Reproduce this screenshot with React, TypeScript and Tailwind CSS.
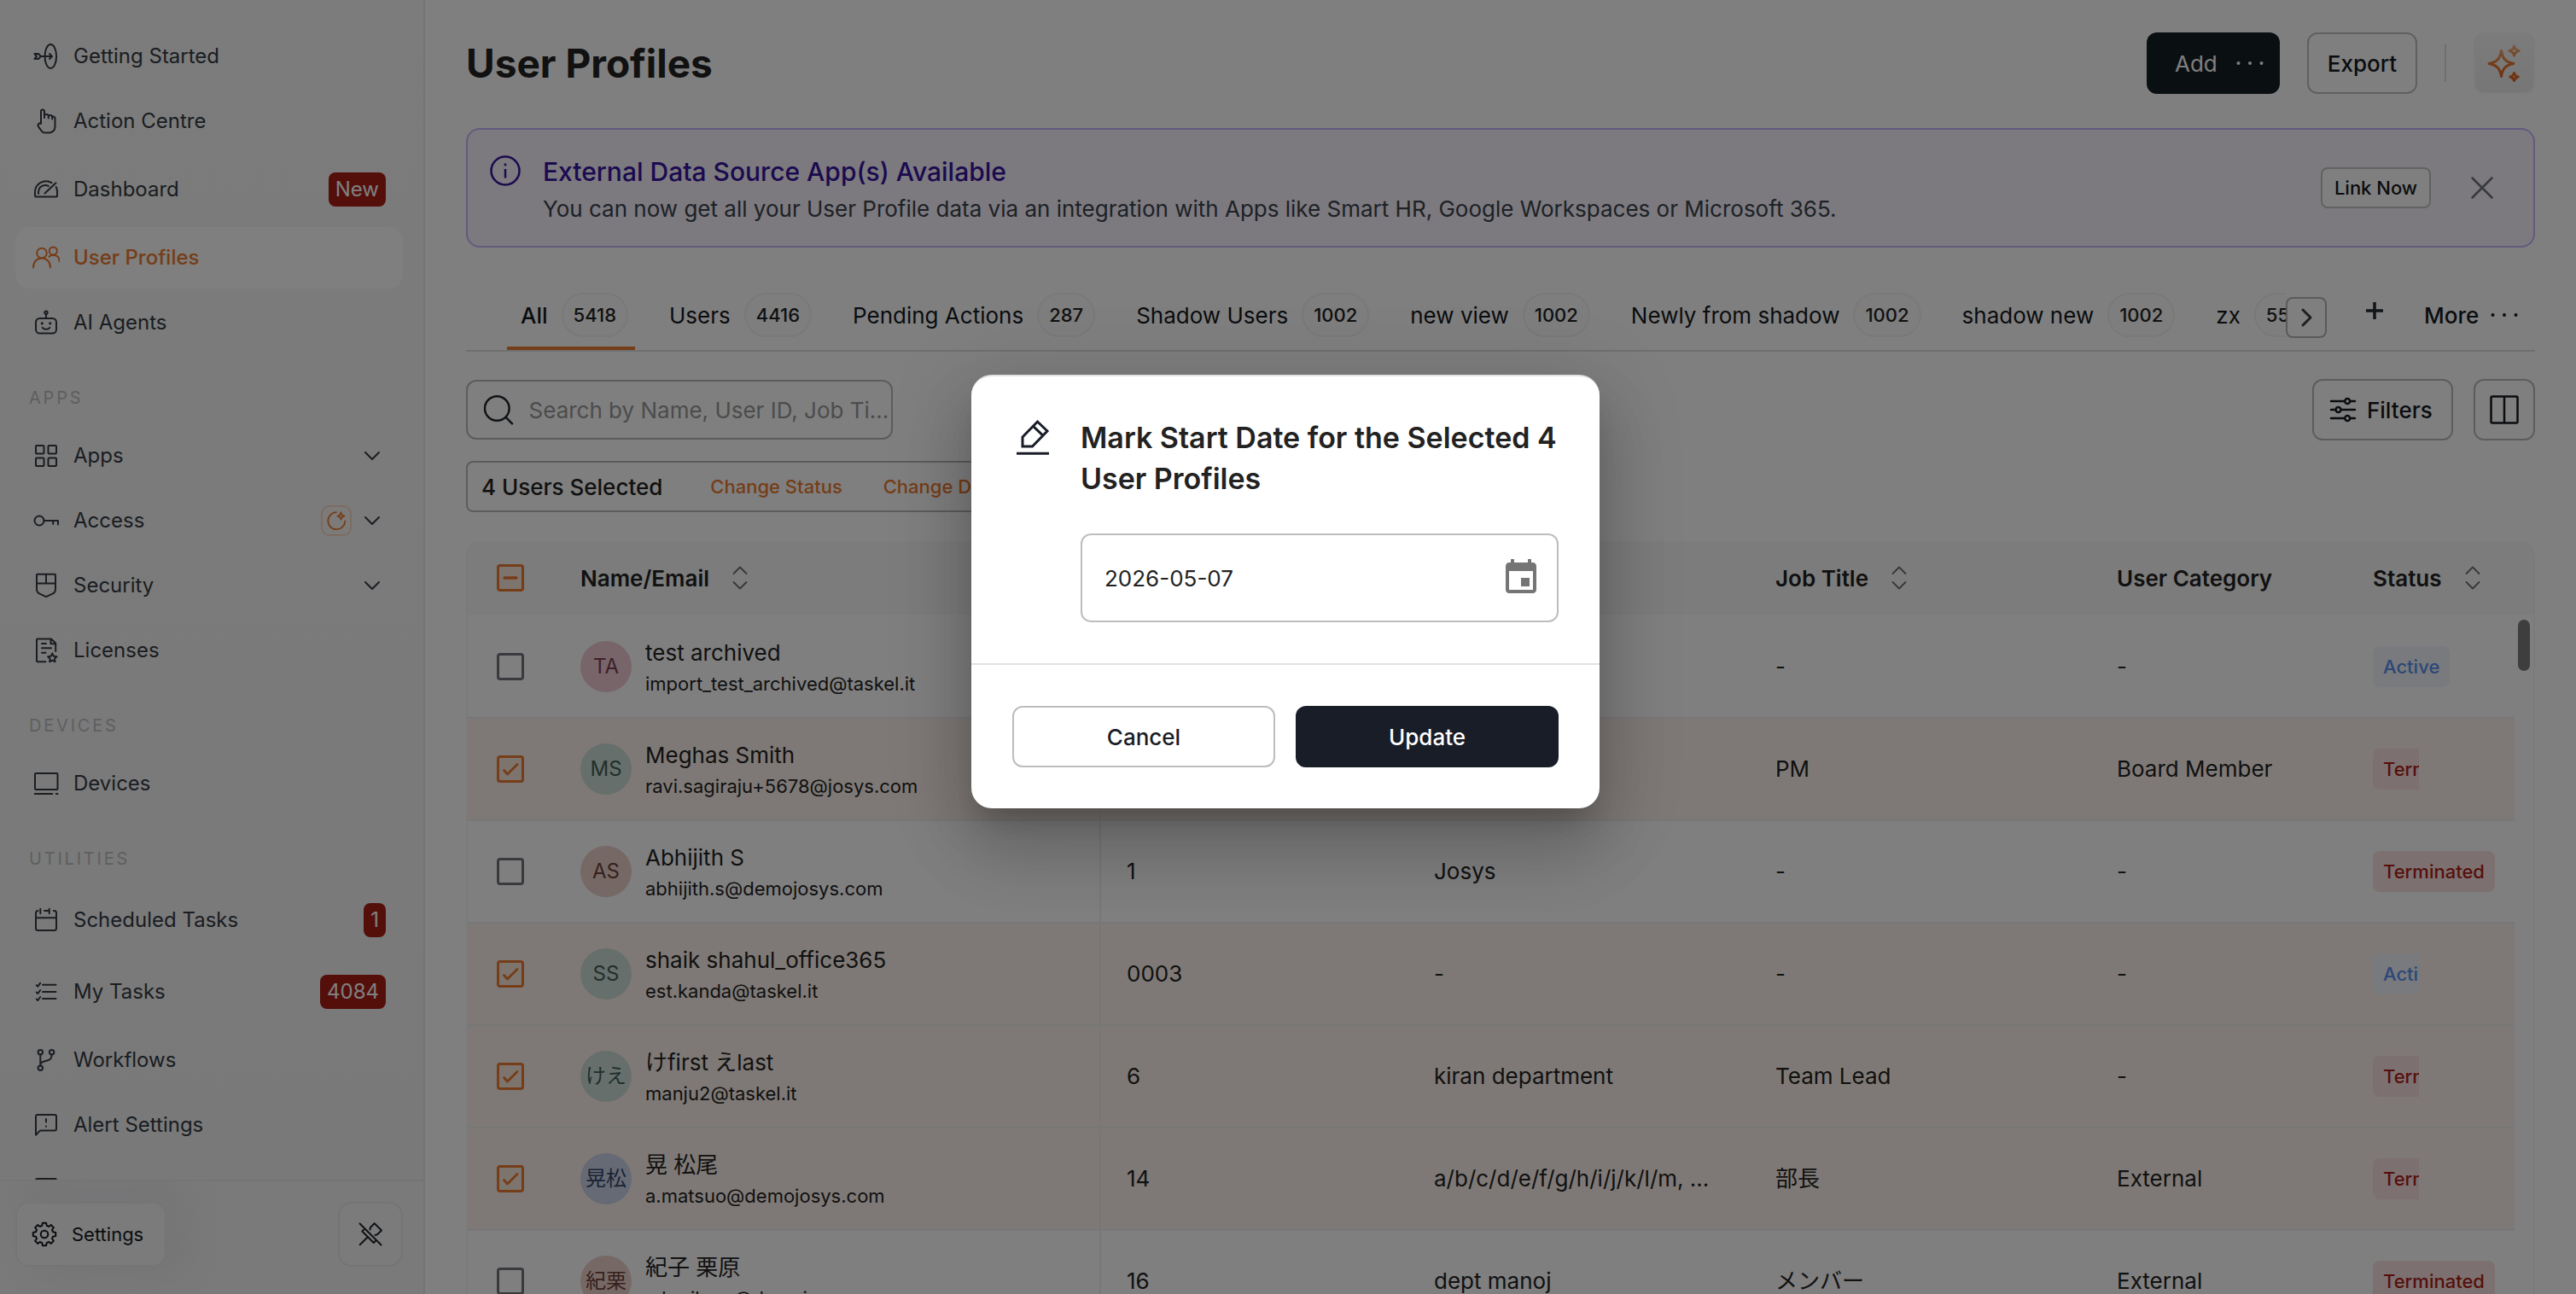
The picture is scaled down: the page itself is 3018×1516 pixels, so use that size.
import React from 'react';

type IconProps = { className?: string };

// Shared wrapper for the 32px line icons of the side navigation
function LineIcon({ children, className }: { children: React.ReactNode; className?: string }) {
  return (
    <svg
      viewBox="0 0 32 32"
      fill="none"
      stroke="currentColor"
      strokeWidth="2"
      strokeLinecap="round"
      strokeLinejoin="round"
      className={className ?? 'size-8 shrink-0'}
    >
      {children}
    </svg>
  );
}

const TargetIcon = () => (
  <LineIcon>
    <ellipse cx="21.300" cy="16" rx="6.800" ry="14" />
    <path d="M10 16h12.500M20 13l3 3-3 3" />
    <path d="M2.500 13H7l3 3-3 3H2.500L5 16z" />
  </LineIcon>
);

const HandIcon = () => (
  <LineIcon>
    <path d="M10 19V4.400a2 2 0 0 1 4 0V12M14 8h2.500a2.300 2.300 0 0 1 2.300 2.300V12.500M18.800 9h2a2.300 2.300 0 0 1 2.300 2.300V13.500M23.100 10.500h.9a2.500 2.500 0 0 1 2.500 2.500v9.500a7 7 0 0 1-7 7h-4.800a5 5 0 0 1-3.700-1.700l-4.200-5.600c-.6-1.400.1-3 1.500-3.700L10 17.500" />
  </LineIcon>
);

const GaugeIcon = () => (
  <LineIcon>
    <path d="M22.500 8.200A12.800 12.800 0 0 0 3 19v4a1.600 1.600 0 0 0 1.600 1.600h22.800A1.600 1.600 0 0 0 29 23v-4c0-2.200-.4-4.200-1.300-6M14.500 20.500 27.500 8.200M7 21v-2c0-4.500 3.400-8 8-8 1.400 0 2.700.3 3.800.9" />
  </LineIcon>
);

const UsersIcon = () => (
  <LineIcon>
    <circle cx="11" cy="10.500" r="5.800" />
    <path d="M1 27.500C1 21 5 16.400 11 16.400S21 21 21 27.500" />
    <circle cx="24.300" cy="8" r="4.600" />
    <path d="M19.500 14.800c1.300-1.300 2.900-2 4.800-2 4.400 0 7.200 2.800 7.200 7.200" />
  </LineIcon>
);

const BotIcon = () => (
  <LineIcon>
    <rect x="4" y="11" width="24" height="17.500" rx="4.500" />
    <circle cx="16" cy="4.300" r="1.700" />
    <path d="M16 6.500V11M11.700 21.800c1 1.300 2.500 2 4.300 2s3.300-.7 4.300-2" />
    <circle cx="11.300" cy="16.800" r="1" fill="currentColor" strokeWidth="1.200" />
    <circle cx="20.700" cy="16.800" r="1" fill="currentColor" strokeWidth="1.200" />
  </LineIcon>
);

const AppsIcon = () => (
  <LineIcon>
    <rect x="4" y="4" width="9.500" height="9.500" rx="1" />
    <rect x="18.500" y="4" width="9.500" height="9.500" rx="1" />
    <rect x="4" y="18.500" width="9.500" height="9.500" rx="1" />
    <rect x="18.500" y="18.500" width="9.500" height="9.500" rx="1" />
  </LineIcon>
);

const KeyIcon = () => (
  <LineIcon>
    <circle cx="8" cy="16" r="5.500" />
    <path d="M13.500 16H30v4.500M24.200 16v4" />
  </LineIcon>
);

const ShieldIcon = () => (
  <LineIcon>
    <path d="M5 3.500a.8.800 0 0 1 .8-.8h20.400a.8.800 0 0 1 .8.800V20c0 3-1.200 4.600-3.500 5.700L16 29.200l-7.500-3.500C6.200 24.600 5 23 5 20zM5 13.500h22M16 2.700v10.800" />
  </LineIcon>
);

const LicenseIcon = () => (
  <LineIcon>
    <path d="M15.500 29.200H6a1 1 0 0 1-1-1V3.500a1 1 0 0 1 1-1h16l5.200 5V17M21.500 3v5.200h5.200M11 8h5M11 13.200h11M11 18.700h4.500" />
    <path d="m23.300 19.500 1.600 3.200 3.600.5-2.600 2.500.6 3.600-3.200-1.700-3.200 1.700.6-3.600-2.600-2.500 3.600-.5z" />
  </LineIcon>
);

const MonitorIcon = () => (
  <LineIcon>
    <rect x="3" y="4" width="26.500" height="19" rx="1" />
    <path d="M2.800 28h20.500M27.800 28h1.700" />
  </LineIcon>
);

const CalendarIcon = () => (
  <LineIcon>
    <path d="M6.500 5A2.500 2.500 0 0 0 4 7.500v18A2.500 2.500 0 0 0 6.500 28h19a2.500 2.500 0 0 0 2.500-2.500v-18A2.500 2.500 0 0 0 25.500 5h-.7M14 5h5.500M9.300 2.800v5.500M19.700 2.800v5.500M4 13.300h24" />
  </LineIcon>
);

const TasksIcon = () => (
  <LineIcon>
    <path d="M12 7.700h15.500M12 16h15.500M12 24h15.500M4.800 8.200l1.500 1.500 2.900-4M4.800 16.500l1.500 1.500 2.900-4M4.800 24.500 6.300 26l2.900-4" />
  </LineIcon>
);

const BranchIcon = () => (
  <LineIcon>
    <circle cx="9.300" cy="6.700" r="2.700" />
    <circle cx="22.600" cy="6.700" r="2.700" />
    <circle cx="9.300" cy="25.300" r="2.700" />
    <path d="M9.300 9.400v13.200M22.600 9.400c0 4-1.400 6-4.600 6.900l-5 1.400c-2.200.6-3.700 1.700-3.700 3.800" />
  </LineIcon>
);

const AlertIcon = () => (
  <LineIcon>
    <path d="M4 27.800V6a2 2 0 0 1 2-2h20a2 2 0 0 1 2 2v14.500a2 2 0 0 1-2 2H10.200c-.9 0-1.600.3-2.200.9zM16 9v3.500M16 17.500v.3" />
  </LineIcon>
);

const LogIcon = () => (
  <LineIcon>
    <rect x="4" y="3" width="24" height="24" rx="1.500" />
  </LineIcon>
);

const ChevronDown = () => (
  <svg viewBox="0 0 24 24" fill="none" stroke="currentColor" strokeWidth="2" strokeLinecap="round" strokeLinejoin="round" className="size-6">
    <path d="m4 8 8 8 8-8" />
  </svg>
);

// Gear outline with eight teeth, built from alternating radii
const gearPath = (() => {
  const pts: string[] = [];
  for (let i = 0; i < 8; i++) {
    const base = (i * Math.PI) / 4;
    [
      [-0.26, 10.4],
      [-0.16, 13.4],
      [0.16, 13.4],
      [0.26, 10.4],
    ].forEach(([da, r]) => {
      pts.push(`${(16 + r * Math.sin(base + da)).toFixed(2)} ${(16 - r * Math.cos(base + da)).toFixed(2)}`);
    });
  }
  return `M${pts.join('L')}Z`;
})();

const GearIcon = () => (
  <LineIcon>
    <path d={gearPath} />
    <circle cx="16" cy="16" r="4.300" />
  </LineIcon>
);

const UnpinIcon = () => (
  <svg viewBox="0 0 30 30" fill="none" stroke="currentColor" strokeWidth="2" strokeLinecap="round" strokeLinejoin="round" className="size-[30px]">
    <path d="M2.500 2.500 27.500 27.500M2.700 27.300l8.800-8.800M8 9l-2.700 2.500L18.800 25l2.700-2.700M14.500 9.500 15 7l4.700-4.700L28 10.500l-5 4.800-2.500.7" />
  </svg>
);

const SparklesIcon = () => (
  <svg viewBox="0 0 44 48" fill="none" stroke="url(#spark)" strokeWidth="3" strokeLinejoin="round" className="h-12 w-11">
    <defs>
      <linearGradient id="spark" gradientUnits="userSpaceOnUse" x1="22" y1="2" x2="22" y2="47">
        <stop offset="0" stopColor="#eeb48c" />
        <stop offset="0.500" stopColor="#e87a30" />
        <stop offset="1" stopColor="#d8611c" />
      </linearGradient>
    </defs>
    <path d="M18.500 9.500c1.500 9.200 4.800 13 14.500 15-9.700 2-13 5.800-14.500 15-1.500-9.200-4.800-13-14.500-15 9.700-2 13-5.800 14.500-15z" />
    <path d="M33.600 4c.8 3.400 2 4.800 5.700 5.500-3.700.7-4.900 2.100-5.700 5.500-.8-3.400-2-4.800-5.700-5.500 3.700-.7 4.900-2.100 5.700-5.500z" />
    <path d="M33.500 35.500c.7 2.800 1.700 3.900 4.700 4.500-3 .6-4 1.700-4.700 4.500-.7-2.800-1.700-3.900-4.700-4.500 3-.6 4-1.700 4.700-4.500z" />
  </svg>
);

const RefreshSparkIcon = () => (
  <svg viewBox="0 0 24 24" fill="none" stroke="#ea7a30" strokeWidth="1.800" strokeLinecap="round" strokeLinejoin="round" className="size-6">
    <path d="M12 2.200a10 10 0 1 0 10.300 10.300" />
    <path d="M17.500 2.500c.4 2.700 1.400 3.700 4 4.100-2.600.4-3.600 1.400-4 4.100-.4-2.700-1.400-3.700-4-4.100 2.600-.4 3.600-1.400 4-4.100z" />
  </svg>
);

const SortIcon = () => (
  <svg viewBox="0 0 18 28" fill="none" stroke="#6f6f6f" strokeWidth="1.800" strokeLinecap="round" strokeLinejoin="round" className="h-7 w-[18px]">
    <path d="M1.500 9 9 1.500 16.500 9M1.500 19 9 26.500l7.500-7.500" />
  </svg>
);

const Dots = ({ className }: IconProps) => (
  <svg viewBox="0 0 32 6" fill="currentColor" className={`h-[6px] w-8 ${className ?? ''}`}>
    <circle cx="2.500" cy="3" r="2" />
    <circle cx="16" cy="3" r="2" />
    <circle cx="29.500" cy="3" r="2" />
  </svg>
);

type NavEntry = {
  label: string;
  icon: () => React.ReactElement;
  badge?: string;
  active?: boolean;
  expandable?: boolean;
  spark?: boolean;
};

const navSections: { title?: string; items: NavEntry[] }[] = [
  {
    items: [
      { label: 'Getting Started', icon: TargetIcon },
      { label: 'Action Centre', icon: HandIcon },
      { label: 'Dashboard', icon: GaugeIcon, badge: 'New' },
      { label: 'User Profiles', icon: UsersIcon, active: true },
      { label: 'AI Agents', icon: BotIcon },
    ],
  },
  {
    title: 'APPS',
    items: [
      { label: 'Apps', icon: AppsIcon, expandable: true },
      { label: 'Access', icon: KeyIcon, expandable: true, spark: true },
      { label: 'Security', icon: ShieldIcon, expandable: true },
      { label: 'Licenses', icon: LicenseIcon },
    ],
  },
  {
    title: 'DEVICES',
    items: [{ label: 'Devices', icon: MonitorIcon }],
  },
  {
    title: 'UTILITIES',
    items: [
      { label: 'Scheduled Tasks', icon: CalendarIcon, badge: '1' },
      { label: 'My Tasks', icon: TasksIcon, badge: '4084' },
      { label: 'Workflows', icon: BranchIcon },
      { label: 'Alert Settings', icon: AlertIcon },
      { label: '', icon: LogIcon },
    ],
  },
];

function NavItem({ item }: { item: NavEntry }) {
  const Icon = item.icon;
  return (
    <div className={item.badge ? 'h-[84px] py-1.5' : 'h-[76px] py-0.5'}>
      <div
        className={`flex h-[72px] items-center rounded-2xl pl-5 pr-5 ${
          item.active ? 'bg-[#fefefe] font-medium text-[#ea7a30]' : 'text-[#343b43]'
        }`}
      >
        <Icon />
        <span className="ml-4 flex-1 whitespace-nowrap text-[24px]">{item.label}</span>
        {item.spark && (
          <span className="mr-3 flex size-9 items-center justify-center rounded-[10px] border-2 border-[#f6d9c6] bg-[#faf6f3]">
            <RefreshSparkIcon />
          </span>
        )}
        {item.expandable && (
          <span className="mr-1">
            <ChevronDown />
          </span>
        )}
        {item.badge && (
          <span className="flex h-10 items-center rounded-lg bg-[#a91e17] px-2 text-[24px] text-white">
            {item.badge}
          </span>
        )}
      </div>
    </div>
  );
}

function Sidebar() {
  return (
    <aside className="flex h-full w-[498px] shrink-0 flex-col border-r-2 border-[#e9e9e9] bg-[#f6f6f6]">
      <nav className="h-[1382px] overflow-hidden bg-gradient-to-b from-[#f8f8f8] to-[#f3f3f3] pl-[18px] pr-6 pt-7">
        {navSections.map((section, i) => (
          <div key={i}>
            {section.title && (
              <div className="h-20 pl-4 pt-[35px] text-[20px] leading-[30px] tracking-[2.8px] text-[#bdbfc1]">
                {section.title}
              </div>
            )}
            {section.items.map((item) => (
              <NavItem key={item.label} item={item} />
            ))}
          </div>
        ))}
      </nav>
      <div className="relative flex flex-1 items-start justify-between overflow-hidden border-t-2 border-[#ebebeb] bg-[#f4f4f4] pl-[18px] pr-6 pt-6">
        <div className="absolute left-6 top-0 h-10 w-48 rounded-full bg-[#e7e7eb] blur-xl" />
        <div className="absolute left-10 top-14 h-11 w-44 rounded-full bg-[#e3e3e8] blur-xl" />
        <button className="relative flex h-[76px] w-[177px] items-center rounded-2xl border-2 border-[#ebebeb] bg-[#f7f7f7] pl-4 text-[22px] text-[#14191e]">
          <GearIcon />
          <span className="ml-4">Settings</span>
        </button>
        <button className="relative flex size-[76px] items-center justify-center rounded-2xl border-2 border-[#e8e8e8] bg-[#f6f6f6] text-[#20262c]">
          <UnpinIcon />
        </button>
      </div>
    </aside>
  );
}

function Banner() {
  return (
    <div className="mt-10 flex h-[140px] items-center rounded-2xl border-2 border-[#c8b4fc] bg-[#f8f2ff] pl-6 pr-10">
      <div className="flex flex-1 gap-6 pt-1.5">
        <svg viewBox="0 0 40 40" fill="none" stroke="#36149e" strokeWidth="2.500" className="-mt-px size-10 shrink-0">
          <circle cx="20" cy="20" r="16.500" />
          <path d="M20 18v10.500M20 11.500v2.800" strokeWidth="2.500" />
        </svg>
        <div>
          <div className="text-[30px] font-medium leading-10 text-[#36149e]">
            External Data Source App(s) Available
          </div>
          <div className="mt-[3px] text-[26px] leading-[42px] text-[#3a444b]">
            You can now get all your User Profile data via an integration with Apps like Smart HR,
            Google Workspaces or Microsoft 365.
          </div>
        </div>
      </div>
      <button className="h-12 w-[129px] rounded-lg border-2 border-[#c4c4c4] bg-white text-[22px] font-medium text-[#14191e]">
        Link Now
      </button>
      <svg viewBox="0 0 40 40" fill="none" stroke="#6f757b" strokeWidth="2.500" strokeLinecap="round" className="ml-10 size-10">
        <path d="m8.500 8.500 23 23M31.500 8.500l-23 23" />
      </svg>
    </div>
  );
}

const tabs = [
  { label: 'All', count: '5418' },
  { label: 'Users', count: '4416' },
  { label: 'Pending Actions', count: '287' },
  { label: 'Shadow Users', count: '1002' },
  { label: 'new view', count: '1002' },
  { label: 'Newly from shadow', count: '1002' },
  { label: 'shadow new', count: '1002' },
  { label: 'zx', count: '5541' },
];

function Tabs() {
  return (
    <div className="mt-9 flex h-[86px] items-stretch border-b-2 border-[#dedede] text-[#14191e]">
      <div className="flex w-[2132px] gap-6 overflow-hidden pl-12">
        {tabs.map((tab, i) => (
          <div
            key={tab.label}
            className={`flex h-full shrink-0 items-center gap-4 border-b-4 pl-4 pr-2 pt-1.5 ${
              i === 0 ? 'border-[#ea7a30]' : 'border-transparent'
            }`}
          >
            <span className={`whitespace-nowrap text-[26px] ${i === 0 ? 'font-medium' : ''}`}>{tab.label}</span>
            <span className="flex h-[52px] items-center rounded-full border-2 border-[#f2f2f2] bg-[#fcfcfc] px-3 text-[22px] font-medium text-[#222]">
              {tab.count}
            </span>
          </div>
        ))}
      </div>
      <button className="mt-[22px] flex h-12 w-12 shrink-0 items-center justify-center rounded-lg border-2 border-[#b4b4b4] bg-white text-[#3a3f44]">
        <svg viewBox="0 0 24 24" fill="none" stroke="currentColor" strokeWidth="3" strokeLinecap="round" strokeLinejoin="round" className="size-6">
          <path d="m8 3 9 9-9 9" />
        </svg>
      </button>
      <svg viewBox="0 0 20 20" stroke="#222a33" strokeWidth="3.500" className="ml-[46px] mt-7 size-5 shrink-0">
        <path d="M10 0v20M0 10h20" />
      </svg>
      <div className="ml-[48px] flex items-center gap-[14px] pt-0.5">
        <span className="text-[26px] font-medium">More</span>
        <Dots />
      </div>
    </div>
  );
}

function Toolbar() {
  return (
    <div className="mt-8 flex h-[72px] items-center justify-between">
      <div className="flex h-[70px] w-[500px] items-center rounded-xl border-2 border-[#b9b9b9] pl-[18px]">
        <svg viewBox="0 0 36 36" fill="none" stroke="#20262e" strokeWidth="2.500" strokeLinecap="round" className="size-9">
          <circle cx="16.500" cy="16.500" r="14.500" />
          <path d="m27 27 7.500 7.500" />
        </svg>
        <input
          readOnly
          placeholder="Search by Name, User ID, Job Ti..."
          className="ml-[18px] w-[430px] bg-transparent text-[26px] outline-none placeholder:text-[#989898]"
        />
      </div>
      <div className="flex gap-6">
        <button className="flex h-[72px] w-[165px] items-center rounded-xl border-2 border-[#b9b9b9] pl-[18px] text-[26px] font-medium text-[#14191e]">
          <svg viewBox="0 0 32 32" fill="none" stroke="currentColor" strokeWidth="2.500" strokeLinecap="round" className="size-8">
            <path d="M2 6h15M25.500 6H30M2 16h4.500M14.500 16H30M2 26h15M25.500 26H30" />
            <circle cx="21.200" cy="6" r="3" />
            <circle cx="10.500" cy="16" r="3" />
            <circle cx="21.200" cy="26" r="3" />
          </svg>
          <span className="ml-3">Filters</span>
        </button>
        <button className="flex size-[72px] items-center justify-center rounded-xl border-2 border-[#b9b9b9] text-[#14191e]">
          <svg viewBox="0 0 36 36" fill="none" stroke="currentColor" strokeWidth="2.500" strokeLinejoin="round" className="size-9">
            <rect x="2.500" y="2.500" width="31" height="31" rx="1.500" />
            <path d="M18 2.500v31" />
          </svg>
        </button>
      </div>
    </div>
  );
}

function Checkbox({ state }: { state: 'on' | 'off' | 'mixed' }) {
  if (state === 'off') {
    return <span className="size-8 rounded-[4px] border-[3px] border-[#74747c]" />;
  }
  return (
    <span className="flex size-8 items-center justify-center rounded-[4px] border-[3px] border-[#ea7a30] bg-[#fde9dd]">
      <svg viewBox="0 0 26 26" fill="none" stroke="#ea7a30" strokeWidth="2.800" strokeLinecap="round" strokeLinejoin="round" className="size-[26px]">
        {state === 'on' ? <path d="m5.500 14.500 4 4.500L21 7.500" /> : <path d="M6 13h14" strokeWidth="3.500" />}
      </svg>
    </span>
  );
}

type User = {
  name: string;
  email: string;
  initials: string;
  avatar: string;
  id: string;
  department: string;
  title: string;
  category: string;
  status: 'Active' | 'Terminated';
  selected: boolean;
};

const PINK = 'bg-[#efcad5] text-[#7c4056]';
const GREEN = 'bg-[#cfdfd8] text-[#40605a]';
const PEACH = 'bg-[#ecd2ca] text-[#6c423c]';
const BLUE = 'bg-[#cbd5e8] text-[#36456a]';

const users: User[] = [
  { name: 'test archived', email: 'import_test_archived@taskel.it', initials: 'TA', avatar: PINK, id: '', department: '', title: '-', category: '-', status: 'Active', selected: false },
  { name: 'Meghas Smith', email: 'ravi.sagiraju+5678@josys.com', initials: 'MS', avatar: GREEN, id: '', department: '', title: 'PM', category: 'Board Member', status: 'Terminated', selected: true },
  { name: 'Abhijith S', email: 'abhijith.s@demojosys.com', initials: 'AS', avatar: PEACH, id: '1', department: 'Josys', title: '-', category: '-', status: 'Terminated', selected: false },
  { name: 'shaik shahul_office365', email: 'est.kanda@taskel.it', initials: 'SS', avatar: GREEN, id: '0003', department: '-', title: '-', category: '-', status: 'Active', selected: true },
  { name: 'けfirst えlast', email: 'manju2@taskel.it', initials: 'けえ', avatar: GREEN, id: '6', department: 'kiran department', title: 'Team Lead', category: '-', status: 'Terminated', selected: true },
  { name: '晃 松尾', email: 'a.matsuo@demojosys.com', initials: '晃松', avatar: BLUE, id: '14', department: 'a/b/c/d/e/f/g/h/i/j/k/l/m, ...', title: '部長', category: 'External', status: 'Terminated', selected: true },
  { name: '紀子 栗原', email: 'n.kurihara@demojosys.com', initials: '紀栗', avatar: PEACH, id: '16', department: 'dept manoj', title: 'メンバー', category: 'External', status: 'Terminated', selected: false },
];

function StatusPill({ user }: { user: User }) {
  const tone = user.status === 'Active' ? 'bg-[#f0f4fc] text-[#5a90ee]' : 'bg-[#f9e1e0] text-[#ac1e16]';
  return (
    <div className={`h-12 overflow-hidden ${user.selected ? 'w-[54px]' : ''}`}>
      <span className={`inline-flex h-12 items-center rounded-lg px-3 text-[22px] font-medium ${tone}`}>
        {user.status}
      </span>
    </div>
  );
}

const ROW_GRID = 'grid grid-cols-[742px_360px_400px_400px_300px_196px]';

function UserRow({ user }: { user: User }) {
  return (
    <div
      className={`${ROW_GRID} h-[120px] w-[2398px] items-stretch border-b-2 border-[#efefef] text-[26px] text-[#222] ${
        user.selected ? 'bg-[#fdf3ec]' : ''
      }`}
    >
      <div className="flex items-center border-r-2 border-[#efefef] pl-[34px]">
        <Checkbox state={user.selected ? 'on' : 'off'} />
        <span className={`ml-[66px] flex size-[60px] shrink-0 items-center justify-center whitespace-nowrap rounded-full text-[24px] ${user.avatar}`}>
          {user.initials}
        </span>
        <div className="ml-4 whitespace-nowrap">
          <div className="h-10 text-[26px] leading-[38px]">{user.name}</div>
          <div className="h-[30px] text-[22px] leading-[30px]">{user.email}</div>
        </div>
      </div>
      <div className="flex items-center pb-px pl-[30px]">{user.id}</div>
      <div className="flex items-center pb-px pl-[30px]">{user.department}</div>
      <div className="flex items-center pb-px pl-[30px]">{user.title}</div>
      <div className="flex items-center pb-px pl-[30px]">{user.category}</div>
      <div className="flex items-center pl-[30px]">
        <StatusPill user={user} />
      </div>
    </div>
  );
}

function UserTable() {
  return (
    <div className="relative mt-[34px] flex-1 overflow-hidden rounded-t-2xl border-x-2 border-[#f6f6f6]">
      <div className={`${ROW_GRID} h-[88px] items-center border-b-2 border-white bg-[#f8f8f8] text-[26px] font-semibold text-[#222]`}>
        <div className="flex items-center pl-[34px]">
          <Checkbox state="mixed" />
          <span className="ml-[66px] mr-[27px]">Name/Email</span>
          <SortIcon />
        </div>
        <div />
        <div />
        <div className="flex items-center gap-[27px] pl-[30px]">
          Job Title
          <SortIcon />
        </div>
        <div className="pl-[30px]">User Category</div>
        <div className="flex items-center gap-[27px] pl-[30px]">
          Status
          <SortIcon />
        </div>
      </div>
      {users.map((user) => (
        <UserRow key={user.email} user={user} />
      ))}
      <div className="absolute right-1 top-[92px] h-[60px] w-3.5 rounded-full bg-[#7c7c7c]" />
    </div>
  );
}

function StartDateDialog() {
  return (
    <div className="h-[508px] w-[736px] rounded-3xl border-t-2 border-[#e2e2e2] bg-white shadow-[0px_22px_30px_-14px_rgba(0,0,0,0.2),0px_48px_76px_6px_rgba(0,0,0,0.14),0px_18px_92px_16px_rgba(0,0,0,0.12)]">
      <div className="h-[336px] px-12 pt-12">
        <div className="flex">
          <svg viewBox="0 0 40 44" fill="none" stroke="#181d27" strokeWidth="3" className="ml-1 mt-px h-11 w-10 shrink-0">
            <path d="M8 33V22L25.500 4 37 15 19.500 33zM20.500 9.300 32 20.300" />
            <path d="M1 41.200h38" />
          </svg>
          <h2 className="ml-9 text-[34px] font-semibold leading-[48px] text-[#222]">
            Mark Start Date for the Selected 4<br />
            User Profiles
          </h2>
        </div>
        <div className="ml-20 mt-10 flex h-[104px] items-center justify-between rounded-xl border-2 border-[#bdbdbd] pl-[26px] pr-[18px]">
          <span className="text-[26px] text-[#222]">2026-05-07</span>
          <svg viewBox="0 0 24 24" fill="#757575" className="size-12">
            <path d="M17 12h-5v5h5v-5zM16 1v2H8V1H6v2H5c-1.110 0-1.990.9-1.990 2L3 19c0 1.100.890 2 2 2h14c1.100 0 2-.9 2-2V5c0-1.100-.9-2-2-2h-1V1h-2zm3 18H5V8h14v11z" />
          </svg>
        </div>
      </div>
      <div className="flex justify-between border-t-2 border-[#e2e2e2] px-12 pt-12">
        <button className="h-[72px] w-[308px] rounded-xl border-2 border-[#bdbdbd] text-[26px] font-medium text-[#181d27]">
          Cancel
        </button>
        <button className="h-[72px] w-[308px] rounded-xl bg-[#181d27] text-[26px] font-medium text-white">
          Update
        </button>
      </div>
    </div>
  );
}

export default function App() {
  return (
    <div className="relative flex h-[1516px] w-[3018px] overflow-hidden bg-white font-['Inter','Noto_Sans_CJK_JP',sans-serif]">
      <Sidebar />
      <main className="flex flex-1 flex-col px-12 pt-[38px]">
        <header className="flex h-[72px] items-center">
          <h1 className="flex-1 text-[46px] font-bold text-[#222]">User Profiles</h1>
          <button className="flex h-[72px] w-[156px] items-center rounded-xl bg-[#141e22] pl-[33px] text-[26px] text-white">
            Add
            <Dots className="ml-[22px]" />
          </button>
          <button className="ml-8 h-[72px] w-[129px] rounded-xl border-2 border-[#c0c0c0] text-[26px] font-medium text-[#14191e]">
            Export
          </button>
          <div className="ml-8 h-11 w-0.5 bg-[#dcdcdc]" />
          <div className="ml-8 flex size-[72px] items-center justify-center rounded-xl border-2 border-[#f6f6f6] bg-gradient-to-b from-[#f8f8f8] to-[#ededed]">
            <SparklesIcon />
          </div>
        </header>
        <Banner />
        <Tabs />
        <Toolbar />
        <div className="mt-6 flex h-[60px] w-[1240px] items-center rounded-lg border-2 border-[#b9b9b9] pl-4 text-[22px] font-medium text-[#ea7a30]">
          <span className="mr-14 text-[26px] text-[#222]">4 Users Selected</span>
          <span className="mr-12">Change Status</span>
          <span>Change Department</span>
        </div>
        <UserTable />
      </main>
      <div className="absolute inset-0 bg-black/50 pl-[1138px] pt-[439px]">
        <StartDateDialog />
      </div>
    </div>
  );
}
